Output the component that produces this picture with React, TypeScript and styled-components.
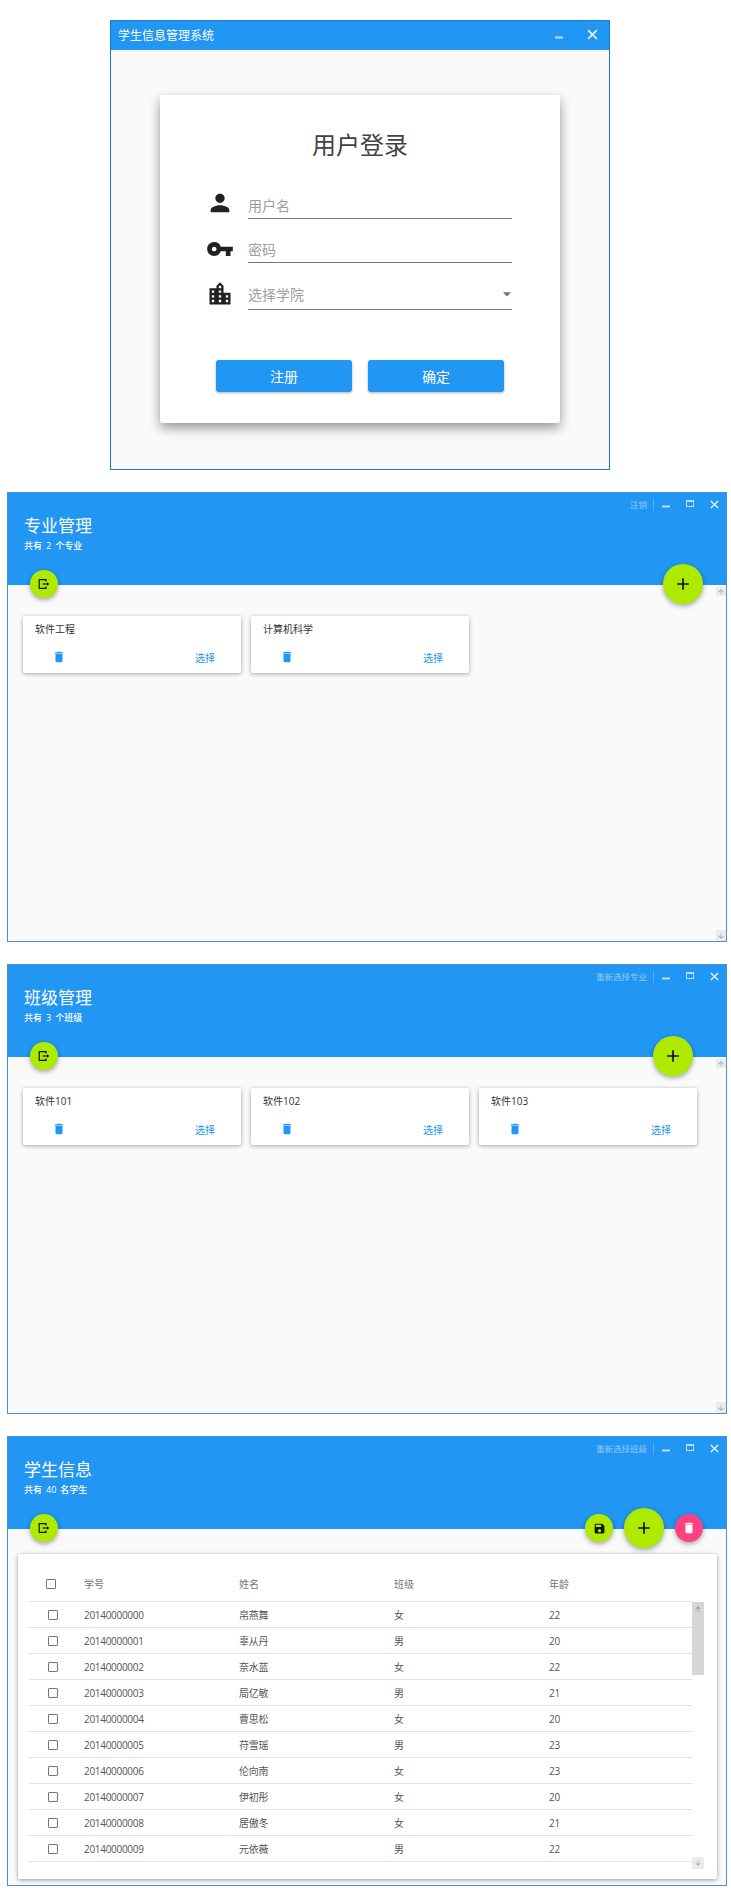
import React from "react";
import styled, { createGlobalStyle } from "styled-components";
import {
  MdAdd,
  MdArrowDownward,
  MdArrowDropDown,
  MdArrowUpward,
  MdDelete,
  MdLocationCity,
  MdPerson,
  MdSave,
  MdVpnKey,
} from "react-icons/md";

const blue = "#2196f3";
const lime = "#aeea00";
const font = `"Open Sans", "Noto Sans CJK SC", sans-serif`;

const students = [
  ["20140000000", "帛燕舞", "女", 22],
  ["20140000001", "辜从丹", "男", 20],
  ["20140000002", "奈水蓝", "女", 22],
  ["20140000003", "局亿敏", "男", 21],
  ["20140000004", "曹思松", "女", 20],
  ["20140000005", "苻雪瑶", "男", 23],
  ["20140000006", "伦向南", "女", 23],
  ["20140000007", "伊初彤", "女", 20],
  ["20140000008", "居傲冬", "女", 21],
  ["20140000009", "元依薇", "男", 22],
];

const ExitIcon = () => (
  <svg width="12" height="12" viewBox="0 0 12 12" fill="none">
    <path d="M8 3.5V1.7H1.2v8.6H8V8.5" stroke="#111" strokeWidth="1.2" />
    <path d="M4.5 6h5.2" stroke="#111" strokeWidth="1.2" />
    <path d="M9 4.2 11.4 6 9 7.800z" fill="#111" />
  </svg>
);

const MinIcon = () => (
  <svg width="10" height="10" viewBox="0 0 10 10">
    <rect x="1" y="6.500" width="8" height="2" fill="currentColor" />
  </svg>
);

const MaxIcon = () => (
  <svg width="10" height="10" viewBox="0 0 10 10" fill="none">
    <rect x="1.500" y="1.500" width="7" height="6" stroke="currentColor" />
    <rect x="1" y="1" width="8" height="2" fill="currentColor" />
  </svg>
);

const CloseIcon = ({ size = 9 }: { size?: number }) => (
  <svg width={size} height={size} viewBox="0 0 10 10" fill="none">
    <path d="M1 1l8 8M9 1l-8 8" stroke="currentColor" strokeWidth="1.600" />
  </svg>
);

type PanelProps = {
  title: string;
  count: number;
  unit: string;
  label: string;
  children: React.ReactNode;
  fabs: React.ReactNode;
  rail?: boolean;
};

const Panel = ({ title, count, unit, label, children, fabs, rail }: PanelProps) => (
  <PanelWindow>
    <PanelHeader>
      <Controls>
        <ControlLabel>{label}</ControlLabel>
        <Control>
          <MinIcon />
        </Control>
        <Control>
          <MaxIcon />
        </Control>
        <Control $bright>
          <CloseIcon />
        </Control>
      </Controls>
      <PanelTitle>{title}</PanelTitle>
      <PanelSub>
        共有<b>{count}</b>
        {unit}
      </PanelSub>
    </PanelHeader>
    <ExitFab>
      <ExitIcon />
    </ExitFab>
    {fabs}
    {children}
    {rail && (
      <PageRail>
        <RailButton $h={9}>
          <MdArrowUpward size={8} />
        </RailButton>
        <RailButton $h={11}>
          <MdArrowDownward size={8} />
        </RailButton>
      </PageRail>
    )}
  </PanelWindow>
);

const ItemCard = ({ name }: { name: string }) => (
  <Card>
    <CardName>{name}</CardName>
    <CardActions>
      <TrashButton>
        <MdDelete size={14} />
      </TrashButton>
      <SelectLink>选择</SelectLink>
    </CardActions>
  </Card>
);

export default function App() {
  return (
    <Page>
      <GlobalStyle />
      <LoginWindow>
        <LoginBar>
          <LoginBarTitle>学生信息管理系统</LoginBarTitle>
          <LoginControls>
            <Control $wide>
              <MinIcon />
            </Control>
            <Control $wide $bright>
              <CloseIcon size={11} />
            </Control>
          </LoginControls>
        </LoginBar>
        <LoginCard>
          <LoginTitle>用户登录</LoginTitle>
          <Field>
            <FieldIcon>
              <MdPerson size={28} />
            </FieldIcon>
            <FieldInput $pad={4}>用户名</FieldInput>
          </Field>
          <Field $gap={12}>
            <FieldIcon $shift={4}>
              <MdVpnKey size={28} />
            </FieldIcon>
            <FieldInput $pad={4}>密码</FieldInput>
          </Field>
          <Field $gap={15}>
            <FieldIcon>
              <MdLocationCity size={28} />
            </FieldIcon>
            <FieldInput>
              选择学院
              <DropArrow>
                <MdArrowDropDown size={20} />
              </DropArrow>
            </FieldInput>
          </Field>
          <LoginButtons>
            <LoginButton>注册</LoginButton>
            <LoginButton>确定</LoginButton>
          </LoginButtons>
        </LoginCard>
      </LoginWindow>

      <Panel
        rail
        title="专业管理"
        count={2}
        unit="个专业"
        label="注销"
        fabs={
          <AddFab $right={23}>
            <MdAdd size={20} />
          </AddFab>
        }
      >
        <CardGrid>
          <ItemCard name="软件工程" />
          <ItemCard name="计算机科学" />
        </CardGrid>
      </Panel>

      <Panel
        rail
        title="班级管理"
        count={3}
        unit="个班级"
        label="重新选择专业"
        fabs={
          <AddFab $right={33}>
            <MdAdd size={20} />
          </AddFab>
        }
      >
        <CardGrid>
          <ItemCard name="软件101" />
          <ItemCard name="软件102" />
          <ItemCard name="软件103" />
        </CardGrid>
      </Panel>

      <Panel
        title="学生信息"
        count={40}
        unit="名学生"
        label="重新选择班级"
        fabs={
          <FabGroup>
            <SmallFab>
              <MdSave size={13} />
            </SmallFab>
            <BigFab>
              <MdAdd size={20} />
            </BigFab>
            <SmallFab $color="#ff4081">
              <MdDelete size={14} color="#fff" />
            </SmallFab>
          </FabGroup>
        }
      >
        <TableCard>
          <Table>
            <HeadRow>
              <HeadCheck />
              <span>学号</span>
              <span>姓名</span>
              <span>班级</span>
              <span>年龄</span>
            </HeadRow>
            {students.map((s) => (
              <Row key={s[0]}>
                <RowCheck />
                <span>{s[0]}</span>
                <span>{s[1]}</span>
                <span>{s[2]}</span>
                <span>{s[3]}</span>
              </Row>
            ))}
          </Table>
          <TableScroll>
            <ScrollThumb>
              <MdArrowUpward size={8} />
            </ScrollThumb>
            <RailButton $h={12}>
              <MdArrowDownward size={8} />
            </RailButton>
          </TableScroll>
        </TableCard>
      </Panel>
    </Page>
  );
}

const GlobalStyle = createGlobalStyle`
  html, body {
    margin: 0;
    padding: 0;
    background: #fff;
  }

  * {
    box-sizing: border-box;
  }
`;

const Page = styled.div`
  display: flex;
  flex-direction: column;
  gap: 22px;
  padding: 20px 0 14px 7px;
  font-family: ${font};
`;

const LoginWindow = styled.div`
  width: 500px;
  height: 450px;
  margin-left: 103px;
  background: #fafafa;
  border: 1px solid #1976d2;
`;

const LoginBar = styled.div`
  display: flex;
  align-items: center;
  justify-content: space-between;
  height: 29px;
  padding: 0 5px 2px 7px;
  background: ${blue};
`;

const LoginBarTitle = styled.span`
  font-size: 12px;
  color: #fff;
`;

const LoginControls = styled.div`
  display: flex;
  align-items: center;
  gap: 11px;
`;

const LoginCard = styled.div`
  width: 400px;
  height: 328px;
  margin: 45px auto 0;
  padding-top: 34px;
  background: #fff;
  border-radius: 2px;
  box-shadow: 0 5px 12px rgba(0, 0, 0, 0.4);
`;

const LoginTitle = styled.div`
  margin-bottom: 26px;
  font-size: 24px;
  line-height: 32px;
  text-align: center;
  color: #424242;
`;

const Field = styled.div<{ $gap?: number }>`
  display: flex;
  align-items: center;
  gap: 14px;
  height: 32px;
  margin-top: ${(p) => p.$gap ?? 0}px;
  padding-left: 46px;
`;

const FieldIcon = styled.span<{ $shift?: number }>`
  display: flex;
  justify-content: center;
  width: 28px;
  padding-top: ${(p) => p.$shift ?? 0}px;
  color: #212121;
`;

const FieldInput = styled.div<{ $pad?: number }>`
  display: flex;
  align-items: center;
  justify-content: space-between;
  width: 264px;
  height: 32px;
  padding-top: ${(p) => p.$pad ?? 0}px;
  font-size: 14px;
  color: #9e9e9e;
  border-bottom: 1px solid #757575;
`;

const DropArrow = styled.span`
  display: flex;
  margin-right: -5px;
  color: #757575;
`;

const LoginButtons = styled.div`
  display: flex;
  justify-content: center;
  gap: 16px;
  margin-top: 50px;
`;

const LoginButton = styled.button`
  width: 136px;
  height: 32px;
  padding: 0;
  font-family: ${font};
  font-size: 14px;
  color: #fff;
  background: ${blue};
  border: 0;
  border-radius: 3px;
  box-shadow: 0 1px 3px rgba(0, 0, 0, 0.3);
`;

const PanelWindow = styled.div`
  position: relative;
  display: flex;
  flex-direction: column;
  width: 720px;
  height: 450px;
  background: #fafafa;
  border: 1px solid #4a90d9;
`;

const PanelHeader = styled.div`
  flex: none;
  height: 92px;
  padding-left: 16px;
  color: #fff;
  background: ${blue};
`;

const Controls = styled.div`
  display: flex;
  align-items: center;
  justify-content: flex-end;
  height: 22px;
  margin-bottom: 0;
  color: rgba(255, 255, 255, 0.8);
`;

const ControlLabel = styled.span`
  padding-right: 6px;
  font-size: 8.5px;
  line-height: 11px;
  color: rgba(255, 255, 255, 0.5);
  border-right: 1px solid rgba(255, 255, 255, 0.25);
`;

const Control = styled.span<{ $bright?: boolean; $wide?: boolean }>`
  display: flex;
  align-items: center;
  justify-content: center;
  width: ${(p) => (p.$wide ? 23 : 24)}px;
  color: ${(p) => (p.$bright ? "#e3f2fd" : "#bbdefb")};
`;

const PanelTitle = styled.div`
  font-size: 17px;
  line-height: 22px;
`;

const PanelSub = styled.div`
  margin-top: 2px;
  font-size: 9px;
  line-height: 14px;
  font-weight: 500;

  b {
    margin: 0 4px;
    font-weight: 500;
  }
`;

const Fab = styled.button<{ $color?: string }>`
  display: flex;
  align-items: center;
  justify-content: center;
  flex: none;
  padding: 0;
  color: #111;
  background: ${(p) => p.$color ?? lime};
  border: 0;
  border-radius: 50%;
  box-shadow: 0 2px 5px rgba(0, 0, 0, 0.35);
`;

const SmallFab = styled(Fab)`
  width: 28px;
  height: 28px;
`;

const BigFab = styled(Fab)`
  width: 40px;
  height: 40px;
`;

const ExitFab = styled(SmallFab)`
  position: absolute;
  top: 77px;
  left: 22px;
`;

const AddFab = styled(BigFab)<{ $right: number }>`
  position: absolute;
  top: 71px;
  right: ${(p) => p.$right}px;
`;

const FabGroup = styled.div`
  position: absolute;
  top: 71px;
  right: 23px;
  display: flex;
  align-items: center;
  gap: 11px;
`;

const CardGrid = styled.div`
  display: flex;
  gap: 10px;
  padding: 31px 0 0 15px;
`;

const Card = styled.div`
  width: 218px;
  height: 57px;
  padding: 7px 0 0 12px;
  background: #fff;
  border-radius: 2px;
  box-shadow: 0 1px 4px rgba(0, 0, 0, 0.35);
`;

const CardName = styled.div`
  font-size: 10px;
  line-height: 13px;
  color: #333;
`;

const CardActions = styled.div`
  display: flex;
  align-items: center;
  justify-content: space-between;
  margin-top: 13px;
  padding: 0 26px 0 17px;
`;

const TrashButton = styled.span`
  display: flex;
  color: ${blue};
`;

const SelectLink = styled.span`
  padding-top: 2px;
  font-size: 10px;
  line-height: 14px;
  color: ${blue};
`;

const PageRail = styled.div`
  position: absolute;
  top: 94px;
  right: 0;
  bottom: 0;
  display: flex;
  flex-direction: column;
  justify-content: space-between;
  width: 10px;
`;

const RailButton = styled.span<{ $h: number }>`
  display: flex;
  align-items: center;
  justify-content: center;
  height: ${(p) => p.$h}px;
  color: #9e9e9e;
  background: #ebebeb;
`;

const TableCard = styled.div`
  display: flex;
  align-items: flex-start;
  width: 699px;
  height: 325px;
  margin: 25px 0 0 10px;
  padding-left: 11px;
  background: #fff;
  border-radius: 2px;
  box-shadow: 0 1px 4px rgba(0, 0, 0, 0.4);
`;

const Table = styled.div`
  flex: none;
  width: 663px;
  font-size: 10px;
  color: #555;
`;

const Row = styled.div`
  display: grid;
  grid-template-columns: 55px repeat(4, 155px);
  align-items: center;
  height: 26px;
  letter-spacing: -0.3px;
  border-bottom: 1px solid #e0e0e0;
`;

const HeadRow = styled(Row)`
  height: 48px;
  padding-top: 12px;
  letter-spacing: 0;
  color: #757575;
`;

const Check = styled.span`
  display: block;
  width: 10px;
  height: 10px;
  border: 1px solid #757575;
  border-radius: 1px;
`;

const HeadCheck = styled(Check)`
  margin-left: 17px;
`;

const RowCheck = styled(Check)`
  margin-left: 19px;
`;

const TableScroll = styled.div`
  display: flex;
  flex-direction: column;
  justify-content: space-between;
  flex: none;
  width: 12px;
  height: 267px;
  margin-top: 48px;
`;

const ScrollThumb = styled.div`
  display: flex;
  justify-content: center;
  height: 73px;
  padding-top: 3px;
  color: #888;
  background: #d6d6d6;
`;
